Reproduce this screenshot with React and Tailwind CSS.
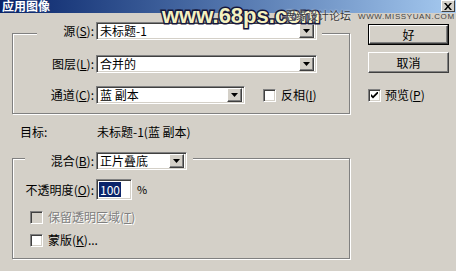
const cjk = { fontFamily: '"Noto Sans CJK SC", "Liberation Sans", sans-serif' }

function Combo({ value, width }) {
  return (
    <div
      className={`${width} h-[18px] flex items-center bg-white border border-[#808080] border-b-white border-r-white shadow-[inset_1px_1px_0_#404040,inset_-1px_-1px_0_#d4d0c8] pl-[3px] pr-[2px]`}
    >
      <span className="flex-1 text-[12px] leading-[14px] text-black whitespace-nowrap">{value}</span>
      <DropButton />
    </div>
  )
}

function DropButton() {
  return (
    <div className="w-[15px] h-[14px] flex items-center justify-center bg-[#d4d0c8] border border-white border-b-[#404040] border-r-[#404040] shadow-[inset_-1px_-1px_0_#808080]">
      <svg width="7" height="4" viewBox="0 0 7 4">
        <path d="M0 0h7L3.5 4z" fill="#000" />
      </svg>
    </div>
  )
}

function Check({ checked, disabled }) {
  return (
    <div
      className={`w-[13px] h-[13px] flex items-center justify-center border border-[#808080] border-b-white border-r-white shadow-[inset_1px_1px_0_#404040,inset_-1px_-1px_0_#d4d0c8] ${disabled ? 'bg-[#d4d0c8]' : 'bg-white'}`}
    >
      {checked && (
        <svg width="7" height="7" viewBox="0 0 7 7">
          <path d="M0 2l2 2 5-5v2.5l-5 5-2-2z" fill="#000" />
        </svg>
      )}
    </div>
  )
}

function Key({ k }) {
  return (
    <span>
      (<u>{k}</u>)
    </span>
  )
}

function Button({ children, primary }) {
  return (
    <div className={primary ? 'border border-black' : ''}>
      <div
        className={`${primary ? 'h-[19px]' : 'h-[21px]'} flex items-center justify-center bg-[#d4d0c8] border border-white border-b-[#404040] border-r-[#404040] shadow-[inset_-1px_-1px_0_#808080] text-[12px] text-black`}
      >
        {children}
      </div>
    </div>
  )
}

export default function App() {
  return (
    <div className="relative w-[456px] h-[271px] overflow-hidden bg-[#d4d0c8] text-black" style={cjk}>
      {/* title bar */}
      <div className="h-[13px] flex items-start justify-between bg-gradient-to-r from-[#0a246a] to-[#a6caf0]">
        <span className="ml-[2px] -mt-[1px] text-[12px] leading-[14px] font-bold text-white">应用图像</span>
        <div className="mr-[1px] w-[14px] h-[12px] flex items-center justify-center bg-[#d4d0c8] border border-white border-b-[#404040] border-r-[#404040]">
          <svg width="8" height="7" viewBox="0 0 8 7">
            <path d="M0 0h2l2 2.5L6 0h2L5 3.5 8 7H6L4 4.5 2 7H0l3-3.5z" fill="#000" />
          </svg>
        </div>
      </div>

      <div className="flex">
        {/* left column */}
        <div className="ml-[12px] w-[338px]">
          {/* group 1 */}
          <div className="mt-[20px] h-[81px] border border-[#808080] shadow-[inset_1px_1px_0_#fff,1px_1px_0_#fff]">
            <div className="-mt-[12px] ml-[24px] w-fit flex items-center bg-[#d4d0c8] pr-[5px]">
              <span className="w-[59px] pr-[2px] text-right text-[12px] whitespace-nowrap">
                源<Key k="S" />:
              </span>
              <Combo value="未标题-1" width="w-[221px]" />
            </div>
            <div className="mt-[15px] flex items-center">
              <span className="w-[83px] pr-[2px] text-right text-[12px] whitespace-nowrap">
                图层<Key k="L" />:
              </span>
              <Combo value="合并的" width="w-[221px]" />
            </div>
            <div className="mt-[13px] flex items-center">
              <span className="w-[83px] pr-[2px] text-right text-[12px] whitespace-nowrap">
                通道<Key k="C" />:
              </span>
              <Combo value="蓝 副本" width="w-[149px]" />
              <div className="ml-[18px]">
                <Check />
              </div>
              <span className="ml-[5px] text-[12px] whitespace-nowrap">
                反相<Key k="I" />
              </span>
            </div>
          </div>

          {/* target */}
          <div className="mt-[10px] flex text-[12px] leading-[16px]">
            <span className="ml-[8px] w-[77px]">目标:</span>
            <span>未标题-1(蓝 副本)</span>
          </div>

          {/* group 2 */}
          <div className="mt-[18px] h-[101px] border border-[#808080] shadow-[inset_1px_1px_0_#fff,1px_1px_0_#fff]">
            <div className="-mt-[7px] ml-[12px] w-fit flex items-center bg-[#d4d0c8] pr-[6px]">
              <span className="w-[71px] pr-[2px] text-right text-[12px] whitespace-nowrap">
                混合<Key k="B" />:
              </span>
              <Combo value="正片叠底" width="w-[91px]" />
            </div>
            <div className="mt-[9px] flex items-center">
              <span className="w-[83px] pr-[2px] text-right text-[12px] whitespace-nowrap">
                不透明度<Key k="O" />:
              </span>
              <div className="w-[36px] h-[21px] flex items-center bg-white border border-[#808080] border-b-white border-r-white shadow-[inset_1px_1px_0_#404040,inset_-1px_-1px_0_#d4d0c8] pl-[2px]">
                <span className="bg-[#0a246a] text-white text-[12px] leading-[15px] px-[1px]">100</span>
              </div>
              <span className="ml-[5px] text-[11px]">%</span>
            </div>
            <div className="mt-[10px] ml-[17px] flex items-center">
              <Check disabled />
              <span className="ml-[5px] text-[12px] leading-[14px] text-[#808080] [text-shadow:1px_1px_0_#fff]">
                保留透明区域<Key k="T" />
              </span>
            </div>
            <div className="mt-[9px] ml-[17px] flex items-center">
              <Check />
              <span className="ml-[5px] text-[12px] leading-[14px]">
                蒙版<Key k="K" />...
              </span>
            </div>
          </div>
        </div>

        {/* right column */}
        <div className="ml-[18px] w-[81px] pt-[11px]">
          <Button primary>好</Button>
          <div className="mt-[7px]">
            <Button>取消</Button>
          </div>
          <div className="mt-[15px] flex items-center">
            <Check checked />
            <span className="ml-[4px] text-[12px] leading-[14px]">
              预览<Key k="P" />
            </span>
          </div>
        </div>
      </div>

      {/* watermark */}
      <div
        className="absolute left-[162px] top-[4px] text-[22px] leading-[24px] font-bold text-[#f4f1c0] [-webkit-text-stroke:3px_#15163c] [paint-order:stroke_fill]"
        style={{ fontFamily: '"Liberation Sans", Arial, sans-serif' }}
      >
        www.68ps.com
      </div>
      <div className="absolute left-[285px] top-[8px] text-[11px] leading-[14px] text-[#3a3a3a] [text-shadow:0_0_2px_#fff]">
        思缘设计论坛
      </div>
      <div
        className="absolute left-[358px] top-[12px] text-[8px] leading-[10px] tracking-[0.6px] text-[#444]"
        style={{ fontFamily: '"Liberation Sans", Arial, sans-serif' }}
      >
        WWW.MISSYUAN.COM
      </div>
    </div>
  )
}
